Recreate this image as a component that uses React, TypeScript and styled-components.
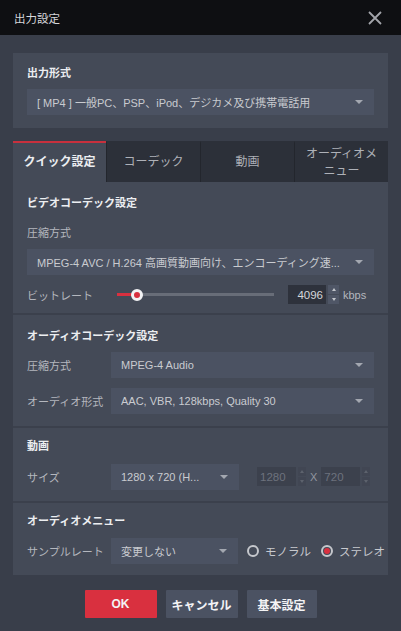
import styled, { createGlobalStyle } from "styled-components";

const GlobalStyle = createGlobalStyle`
  html, body {
    margin: 0;
    padding: 0;
    background: #393e4a;
  }
  body {
    font-family: "Liberation Sans", "Noto Sans CJK JP", sans-serif;
    font-size: 11px;
    color: #b4b7be;
  }
  * {
    box-sizing: border-box;
  }
`;

const Dialog = styled.div`
  width: 401px;
  height: 631px;
  background: #393e4a;
  display: flex;
  flex-direction: column;
  overflow: hidden;
`;

const Header = styled.div`
  height: 35px;
  flex-shrink: 0;
  background: #0e0f12;
  display: flex;
  align-items: center;
  justify-content: space-between;
  padding: 0 19px 0 14px;
`;

const HeaderTitle = styled.div`
  color: #d6d7db;
  font-size: 11.5px;
`;

const CloseButton = styled.div`
  width: 14px;
  height: 14px;
  display: flex;
`;

const Body = styled.div`
  padding: 18px 13px 0;
  display: flex;
  flex-direction: column;
`;

const Panel = styled.div`
  background: #444a57;
  padding: 12px 14px 13px;
  display: flex;
  flex-direction: column;
  gap: 8px;
`;

const Title = styled.div`
  color: #eceef1;
  font-weight: bold;
  line-height: 16px;
`;

const Select = styled.div<{ $width?: number }>`
  height: 26px;
  background: #4b5262;
  color: #c9cbd0;
  display: flex;
  align-items: center;
  padding: 0 10px;
  gap: 8px;
  ${(p) => (p.$width ? `width: ${p.$width}px; flex: none;` : "flex: 1 1 auto;")}
  min-width: 0;
`;

const SelectText = styled.span`
  flex: 1;
  white-space: nowrap;
  overflow: hidden;
`;

const Caret = styled.span`
  width: 0;
  height: 0;
  border-left: 4px solid transparent;
  border-right: 4px solid transparent;
  border-top: 4px solid #a3a7b0;
  margin-right: 1px;
`;

const Tabs = styled.div`
  margin-top: 13px;
  display: flex;
  height: 41px;
`;

const Tab = styled.div<{ $active?: boolean }>`
  flex: 1;
  display: flex;
  align-items: center;
  justify-content: center;
  text-align: center;
  font-size: 12px;
  line-height: 17px;
  background: ${(p) => (p.$active ? "#444a57" : "#2c3039")};
  border-top: 2px solid ${(p) => (p.$active ? "#c8303d" : "#2c3039")};
  color: ${(p) => (p.$active ? "#eceef1" : "#aeb1b8")};
  font-weight: ${(p) => (p.$active ? "bold" : "normal")};
  padding: 0 6px;
  & + & {
    border-left: 1px solid #23262d;
  }
`;

const Content = styled.div`
  background: #444a57;
  display: flex;
  flex-direction: column;
`;

const Section = styled.div<{ $top: number; $bottom: number }>`
  padding: ${(p) => p.$top}px 14px ${(p) => p.$bottom}px;
  display: flex;
  flex-direction: column;
  & + & {
    border-top: 2px solid #3b404c;
  }
`;

const Label = styled.div`
  line-height: 16px;
  margin-top: 14px;
`;

const Row = styled.div<{ $gap: number }>`
  display: flex;
  align-items: center;
  height: 27px;
  margin-top: ${(p) => p.$gap}px;
`;

const RowLabel = styled.div`
  width: 84px;
  flex-shrink: 0;
  white-space: nowrap;
`;

const SliderRow = styled.div`
  display: flex;
  align-items: center;
  height: 19px;
  margin-top: 10px;
`;

const SliderTrack = styled.div`
  width: 157px;
  height: 3px;
  background: #686d78;
  position: relative;
  margin-left: 6px;
`;

const SliderFill = styled.div`
  height: 3px;
  background: #d9303f;
`;

const SliderThumb = styled.div`
  position: absolute;
  top: 50%;
  width: 12px;
  height: 12px;
  margin: -6px 0 0 -6px;
  border-radius: 50%;
  background: #d9303f;
  border: 3px solid #f2f2f4;
`;

const NumberBox = styled.div<{ $disabled?: boolean; $width: number }>`
  width: ${(p) => p.$width}px;
  flex: none;
  height: 19px;
  background: ${(p) => (p.$disabled ? "#3c414d" : "#2e323c")};
  color: ${(p) => (p.$disabled ? "#6d727d" : "#d4d6da")};
  display: flex;
  align-items: center;
  justify-content: ${(p) => (p.$disabled ? "flex-start" : "flex-end")};
  padding: 0 3px;
  font-size: 11.5px;
`;

const Spinner = styled.div<{ $disabled?: boolean }>`
  width: ${(p) => (p.$disabled ? 8 : 11)}px;
  flex: none;
  height: 19px;
  margin-left: 2px;
  display: flex;
  flex-direction: column;
  gap: 1px;
  & > span {
    flex: 1;
    background: ${(p) => (p.$disabled ? "#414653" : "#4f5666")};
    display: flex;
    align-items: center;
    justify-content: center;
  }
`;

const ArrowUp = styled.i<{ $dim?: boolean }>`
  border-left: 2.5px solid transparent;
  border-right: 2.5px solid transparent;
  border-bottom: 3px solid ${(p) => (p.$dim ? "#5d626d" : "#c2c5cb")};
`;

const ArrowDown = styled.i<{ $dim?: boolean }>`
  border-left: 2.5px solid transparent;
  border-right: 2.5px solid transparent;
  border-top: 3px solid ${(p) => (p.$dim ? "#5d626d" : "#c2c5cb")};
`;

const Unit = styled.span<{ $dim?: boolean }>`
  margin: 0 4px;
  color: ${(p) => (p.$dim ? "#9296a0" : "#b4b7be")};
`;

const Radio = styled.label`
  display: flex;
  flex: none;
  align-items: center;
  gap: 6px;
  margin-left: 9px;
  color: #c7c9ce;
  white-space: nowrap;
  font-size: 11.5px;
  & + & {
    margin-left: 10px;
  }
`;

const RadioCircle = styled.span<{ $checked?: boolean }>`
  width: 12px;
  height: 12px;
  border-radius: 50%;
  border: 2px solid #c5c7cc;
  display: flex;
  align-items: center;
  justify-content: center;
  &::after {
    content: "";
    width: 6px;
    height: 6px;
    border-radius: 50%;
    background: ${(p) => (p.$checked ? "#d9303f" : "transparent")};
  }
`;

const Footer = styled.div`
  display: flex;
  justify-content: center;
  gap: 9px;
  margin-top: 15px;
`;

const Button = styled.button<{ $primary?: boolean; $width: number }>`
  width: ${(p) => p.$width}px;
  height: 28px;
  border: none;
  border-radius: 1px;
  background: ${(p) => (p.$primary ? "#d9303f" : "#4b5262")};
  color: #f3f3f5;
  font-family: inherit;
  font-size: 12px;
  font-weight: bold;
  padding: 0;
`;

const Spinners = ({ disabled }: { disabled?: boolean }) => (
  <Spinner $disabled={disabled}>
    <span>
      <ArrowUp $dim={disabled} />
    </span>
    <span>
      <ArrowDown $dim={disabled} />
    </span>
  </Spinner>
);

const Dropdown = ({ text, width }: { text: string; width?: number }) => (
  <Select $width={width}>
    <SelectText>{text}</SelectText>
    <Caret />
  </Select>
);

export default function App() {
  return (
    <Dialog>
      <GlobalStyle />
      <Header>
        <HeaderTitle>出力設定</HeaderTitle>
        <CloseButton>
          <svg width="14" height="14" viewBox="0 0 14 14">
            <path d="M1 1L13 13M13 1L1 13" stroke="#a2a4aa" strokeWidth="1.8" />
          </svg>
        </CloseButton>
      </Header>
      <Body>
        <Panel>
          <Title>出力形式</Title>
          <Dropdown text="[ MP4 ] 一般PC、PSP、iPod、デジカメ及び携帯電話用" />
        </Panel>

        <Tabs>
          <Tab $active>クイック設定</Tab>
          <Tab>コーデック</Tab>
          <Tab>動画</Tab>
          <Tab>
            オーディオメ
            <br />
            ニュー
          </Tab>
        </Tabs>

        <Content>
          <Section $top={13} $bottom={9}>
            <Title>ビデオコーデック設定</Title>
            <Label>圧縮方式</Label>
            <Row $gap={7}>
              <Dropdown text="MPEG-4 AVC / H.264 高画質動画向け、エンコーディング速..." />
            </Row>
            <SliderRow>
              <RowLabel>ビットレート</RowLabel>
              <SliderTrack>
                <SliderFill style={{ width: "13%" }} />
                <SliderThumb style={{ left: "13%" }} />
              </SliderTrack>
              <NumberBox $width={38} style={{ marginLeft: 14 }}>
                4096
              </NumberBox>
              <Spinners />
              <Unit>kbps</Unit>
            </SliderRow>
          </Section>

          <Section $top={13} $bottom={12}>
            <Title>オーディオコーデック設定</Title>
            <Row $gap={7}>
              <RowLabel>圧縮方式</RowLabel>
              <Dropdown text="MPEG-4 Audio" />
            </Row>
            <Row $gap={9}>
              <RowLabel>オーディオ形式</RowLabel>
              <Dropdown text="AAC, VBR, 128kbps, Quality 30" />
            </Row>
          </Section>

          <Section $top={10} $bottom={11}>
            <Title>動画</Title>
            <Row $gap={9}>
              <RowLabel>サイズ</RowLabel>
              <Dropdown text="1280 x 720 (H..." width={128} />
              <NumberBox $disabled $width={39} style={{ marginLeft: 18 }}>
                1280
              </NumberBox>
              <Spinners disabled />
              <Unit $dim>X</Unit>
              <NumberBox $disabled $width={39}>
                720
              </NumberBox>
              <Spinners disabled />
            </Row>
          </Section>

          <Section $top={10} $bottom={11}>
            <Title>オーディオメニュー</Title>
            <Row $gap={8}>
              <RowLabel>サンプルレート</RowLabel>
              <Dropdown text="変更しない" width={127} />
              <Radio>
                <RadioCircle />
                モノラル
              </Radio>
              <Radio>
                <RadioCircle $checked />
                ステレオ
              </Radio>
            </Row>
          </Section>
        </Content>

        <Footer>
          <Button $primary $width={72}>OK</Button>
          <Button $width={72}>キャンセル</Button>
          <Button $width={70}>基本設定</Button>
        </Footer>
      </Body>
    </Dialog>
  );
}
